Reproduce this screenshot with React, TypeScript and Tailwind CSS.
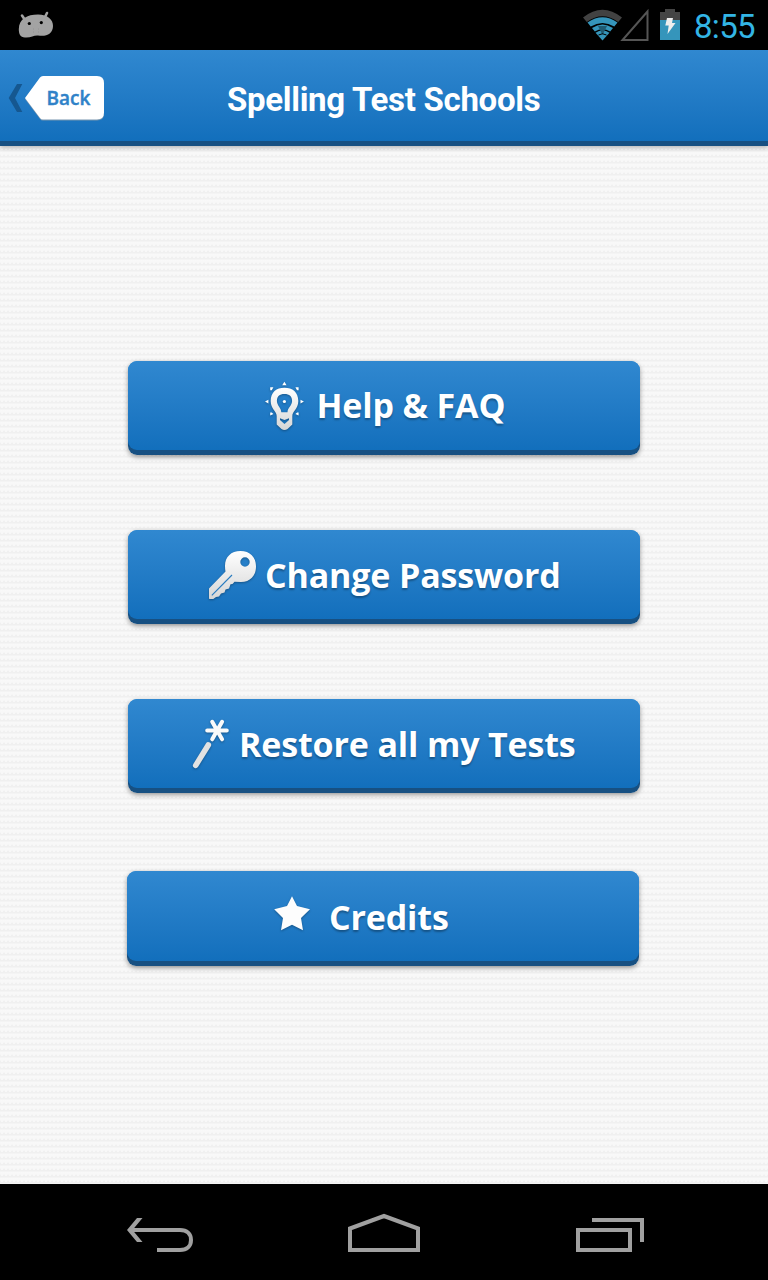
import type { ReactNode } from 'react'

// faint horizontal ribs with a small scalloped edge
const TEXTURE =
    'bg-[#f7f7f7] bg-[radial-gradient(circle_at_2px_3px,#f8f8f8_0.8px,transparent_1.4px),repeating-linear-gradient(180deg,#f9f9f9_0px,#f8f8f8_2px,#f0f0f0_3.5px,#f0f0f0_5px,#f8f8f8_6px)] bg-[size:4px_6px,auto]'

function StatusBar() {
    return (
        <div className="flex h-[50px] shrink-0 items-center bg-black">
            <svg className="ml-[18px]" width="36" height="28" viewBox="18 11 36 28">
                <path d="M22 15.500 L25 20 M47 13 L44.500 18" stroke="#a3a3a3" strokeWidth="2.600" strokeLinecap="round" />
                <path d="M18.800 29 C19 19 27 14.600 38 14.600 C48 14.600 53 20 53 26 C53 34 46 37 38 35.500 C34 35 31 38 25 37.500 C20 37 18.800 34 18.800 29 Z" fill="#a3a3a3" />
                <circle cx="29.300" cy="23.500" r="1.600" fill="#000" />
                <circle cx="41.300" cy="22.600" r="1.600" fill="#000" />
                <path d="M33 29h1M38 29h1M33 32h1M38 32h1" stroke="#929292" />
            </svg>
            <svg className="ml-auto" width="98" height="34" viewBox="583 8 98 34">
                <path d="M583 17.500 Q602.500 2 622 17.500 L618.200 22 Q602.500 10.500 586.800 22 Z" fill="#424242" />
                <g fill="#3595bb">
                    <path d="M587.500 22.500 Q602.500 12 617.500 22.500 L614.300 26.500 Q602.500 19.500 590.700 26.500 Z" />
                    <path d="M592 28 Q602.500 21 613 28 L610.200 31.500 Q602.500 27 594.800 31.500 Z" />
                    <path d="M595.500 32.800 Q602.500 28 609.500 32.800 L602.500 40.500 Z" />
                </g>
                <path d="M598 26 h9 l-4.500 9 z" fill="#205b73" />
                <path d="M598.500 35 q4 -2.500 8 0" stroke="#000" fill="none" />
                <path d="M622.500 40 H647.500 V11.500 Z" fill="none" stroke="#555" strokeWidth="2" />
                <path d="M660 12 h5 V9 h10 v3 h5 v8 h-20 z" fill="#444" />
                <path d="M660 20 h20 v20 h-20 z" fill="#3595bb" />
                <path d="M667 18 h6 l-1 5 h3.500 l-8 11 l1.200 -8.500 h-3.400 z" fill="#eee" />
            </svg>
            <span className="mt-0.5 ml-[13px] mr-3 w-[62px] whitespace-nowrap font-['Roboto',sans-serif] text-[33px] leading-none tracking-[-0.7px] text-[#33b5e5]">8:55</span>
        </div>
    )
}

function Header() {
    return (
        <header className="relative z-10 flex h-24 shrink-0 items-center border-b-[5px] border-[#175082] bg-linear-to-b from-[#3088d0] to-[#126fbc] shadow-[0_2px_4px_rgba(0,0,0,0.25)]">
            <svg className="mt-[5px] ml-2" width="15" height="30" viewBox="8 83 15 30">
                <path d="M22.300 84 H17 L8.700 98 L17 112 H22.300 L15 98 Z" fill="#155790" />
            </svg>
            <button className="relative mt-[5px] ml-0.5 h-[46px] w-[79px] pl-2 font-['Open_Sans',sans-serif] text-[19px] font-semibold text-[#2f82c8]">
                <svg className="absolute inset-0" width="79" height="46" viewBox="25 75 79 46">
                    <path d="M43 77 H97 Q104 77 104 84 V113.500 Q104 120.500 97 120.500 H43 Q41 120.500 40 119 L25 99 L40 78.500 Q41 77 43 77 Z" fill="#7795ae" />
                    <path d="M43 76 H97 Q104 76 104 83 V112.500 Q104 119.500 97 119.500 H43 Q41 119.500 40 118 L25 98 L40 77.500 Q41 76 43 76 Z" fill="#fff" />
                </svg>
                <span className="relative [-webkit-text-stroke:0.4px_#2f82c8]">Back</span>
            </button>
            <h1 className="mt-[7px] ml-[123px] whitespace-nowrap font-['Roboto',sans-serif] text-[33px] leading-none font-bold tracking-[-0.3px] text-white">Spelling Test Schools</h1>
        </header>
    )
}

function IconFill({ id }: { id: string }) {
    return (
        <linearGradient id={id} x1="0" y1="0" x2="0" y2="1">
            <stop offset="0" stopColor="#fff" />
            <stop offset="1" stopColor="#d6d6d6" />
        </linearGradient>
    )
}

const ICON = 'shrink-0 drop-shadow-[0_1px_1px_rgba(0,0,0,0.3)]'

function BulbIcon() {
    return (
        <svg className={ICON} width="41" height="50" viewBox="264 381 41 50">
            <defs><IconFill id="bulb" /></defs>
            <path fill="url(#bulb)" fillRule="evenodd" d="M284.400 387.700 C292.500 387.700 298.300 392 298.300 401 C298.300 409 292.300 411 292.300 416 V424.500 L287.500 429 Q284.500 431 281.500 429 L276.700 424.500 V416 C276.700 411 270.700 409 270.700 401 C270.700 392 276.500 387.700 284.400 387.700 Z M284.400 394 C279.500 394 276.900 396.500 276.900 401 C276.900 405.500 281.300 408 281.300 412.300 H287.500 C287.500 408 292.100 405.500 292.100 401 C292.100 396.500 289.500 394 284.400 394 Z M280 418.300 V420 L284.500 424 L289 420 V418.300 L284.500 420 Z" />
            <g fill="#fff">
                <circle cx="284.400" cy="401.500" r="1.600" />
                <path d="M284.400 381.800 L286.600 385.300 H282.200 Z M265 401.600 L268.400 399.700 V403.500 Z M303.900 401.600 L300.500 399.700 V403.500 Z" />
                <path d="M270.200 387.200 h3.200 l-1.600 3 h-1.600 z M298.600 387.200 h-3.200 l1.600 3 h1.600 z M270.200 415.500 v-3.100 h1.400 l1.800 1.600 z M298.600 415.500 v-3.100 h-1.400 l-1.800 1.600 z" />
            </g>
        </svg>
    )
}

function KeyIcon() {
    return (
        <svg className={ICON} width="49" height="50" viewBox="208 550 49 50">
            <defs><IconFill id="key" /></defs>
            <path fill="url(#key)" fillRule="evenodd" d="M240.500 551 C250 551 256 557 256 566.500 C256 576 250 582 241 582 L234.500 581.800 L232.500 584 L230.500 584.300 L229 588.500 L225.500 589.500 L224.500 592.500 L221 593.500 L219 596.500 L216 597 L213.300 599 H209.500 L209 598.500 V588.500 L225.500 571.500 Q225 569 225 566 C225 557 231 551 240.500 551 Z M245 557.300 A4.700 4.700 0 1 0 245 566.700 A4.700 4.700 0 1 0 245 557.300 Z" />
            <path d="M211.800 595.300 L232 575" stroke="#277abf" strokeWidth="1.100" />
        </svg>
    )
}

function WandIcon() {
    return (
        <svg className={ICON} width="38" height="50" viewBox="192 719 38 50">
            <path d="M195.700 765.400 L208.300 745" stroke="#e2e2e2" strokeWidth="5.600" strokeLinecap="round" />
            <path d="M207.200 730.500 H226.800 M212.200 721.800 L222.100 739.300 M222.100 721.800 L212.200 739.300" stroke="#fafafa" strokeWidth="4" strokeLinecap="round" />
        </svg>
    )
}

function StarIcon() {
    return (
        <svg className={ICON} width="36" height="36" viewBox="274 896 36 36">
            <path d="M292 896.300 L297 905.900 L310 909.200 L301 918 L303 930.300 L292 924.700 L281 930.300 L283 918 L274.200 909.200 L287 905.900 Z" fill="#fdfdfd" />
        </svg>
    )
}

function MenuButton({ className, children }: { className: string, children: ReactNode }) {
    return (
        <button className={`flex w-[512px] items-start rounded-[9px] bg-linear-to-b from-[#3088d0] from-20% to-[#175082] to-80% pb-[5px] shadow-[0_2px_5px_rgba(0,0,0,0.38)] ${className}`}>
            <span className="flex h-full w-full items-start rounded-[9px] bg-linear-to-b from-[#3088d0] to-[#126fbc]">
                {children}
            </span>
        </button>
    )
}

const LABEL = "whitespace-nowrap font-['Open_Sans',sans-serif] text-[34px] leading-[46px] font-bold tracking-[-0.15px] text-white [text-shadow:0_2px_2px_rgba(0,0,0,0.3)]"

function NavBar() {
    return (
        <nav className="flex h-24 shrink-0 items-start bg-black">
            <svg className="mt-8 ml-[126px]" width="68" height="38" viewBox="126 1216 68 38" fill="none" stroke="#a0a0a0" strokeWidth="4">
                <path d="M130 1230 H180 C187 1230 191 1234 191 1240 C191 1246 187 1250 180 1250 H157" />
                <path d="M127 1230 L137 1218 H142.500 L132.500 1230 L142.500 1242 H137 Z" fill="#a0a0a0" stroke="none" />
            </svg>
            <svg className="mt-7 ml-[153px]" width="74" height="42" viewBox="347 1212 74 42" fill="none" stroke="#a0a0a0" strokeWidth="4">
                <path d="M350 1250 V1228.500 L384 1216 L418 1228.500 V1250 Z" />
            </svg>
            <svg className="mt-8 ml-[154px]" width="70" height="38" viewBox="575 1216 70 38" fill="none" stroke="#a0a0a0" strokeWidth="4">
                <path d="M578 1230 H630 V1250 H578 Z M592 1220 H642 V1242" />
            </svg>
        </nav>
    )
}

export default function App() {
    return (
        <div className="flex h-[1280px] w-[768px] flex-col overflow-hidden">
            <StatusBar />
            <Header />
            <main className={`flex grow flex-col pt-[215px] pl-32 ${TEXTURE}`}>
                <MenuButton className="h-[94px]">
                    <span className="mt-5 ml-[136px]"><BulbIcon /></span>
                    <span className={`mt-[21px] ml-[11.5px] ${LABEL}`}>Help &amp; FAQ</span>
                </MenuButton>
                <MenuButton className="mt-[75px] h-[94px]">
                    <span className="mt-5 ml-20"><KeyIcon /></span>
                    <span className={`mt-[22px] ml-2 ${LABEL}`}>Change Password</span>
                </MenuButton>
                <MenuButton className="mt-[75px] h-[94px]">
                    <span className="mt-5 ml-16"><WandIcon /></span>
                    <span className={`mt-[22px] ml-[9px] ${LABEL}`}>Restore all my Tests</span>
                </MenuButton>
                <MenuButton className="mt-[78px] -ml-px h-[95px]">
                    <span className="mt-[25px] ml-[147px]"><StarIcon /></span>
                    <span className={`mt-[23px] ml-[19px] ${LABEL}`}>Credits</span>
                </MenuButton>
            </main>
            <NavBar />
        </div>
    )
}
